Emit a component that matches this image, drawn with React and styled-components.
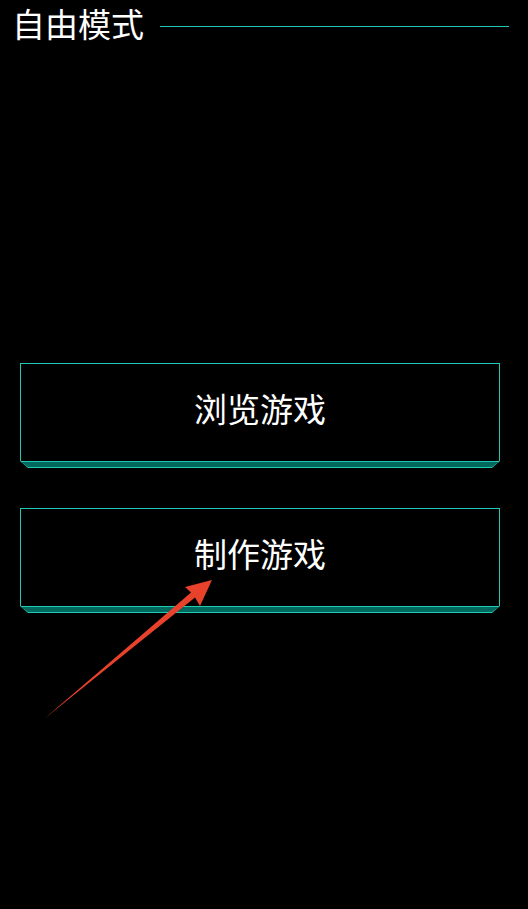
import styled, { createGlobalStyle } from 'styled-components'

const GlobalStyle = createGlobalStyle`
    html, body {
        margin: 0;
        padding: 0;
        background: #000;
    }
    body {
        font-family: "Noto Sans CJK SC", "Noto Sans", sans-serif;
        color: #fff;
    }
`
const Page = styled.div`
    position: relative;
    width: 528px;
    min-height: 909px;
    background: #000;
    overflow: hidden;
`
const Header = styled.div`
    display: flex;
    align-items: center;
    height: 46px;
    padding: 0 19px 0 12px;
    gap: 16px;
`
const Title = styled.h1`
    margin: 0;
    font-size: 33px;
    font-weight: 400;
    line-height: 42px;
    white-space: nowrap;
`
const Rule = styled.div`
    flex: 1;
    height: 1px;
    margin-top: 6px;
    background: #1fc9b5;
`
const Menu = styled.div`
    display: flex;
    flex-direction: column;
    gap: 40px;
    padding: 0 28px 0 20px;
    margin-top: 317px;
`
const ButtonWrap = styled.div`
    display: flex;
    flex-direction: column;
`
const Button = styled.button`
    height: 98px;
    box-sizing: border-box;
    background: #000;
    border: 1px solid #1fc9b5;
    border-bottom: none;
    color: #fff;
    font-family: inherit;
    font-size: 33px;
    line-height: 1;
    padding: 0 0 8px;
    cursor: pointer;
`
const Tray = styled.div`
    height: 7px;
    box-sizing: border-box;
    background: #1fc9b5;
    clip-path: polygon(0 0, 100% 0, calc(100% - 8px) 100%, 8px 100%);
    padding: 1px 1px 1px;
`
const TrayFill = styled.div`
    height: 100%;
    background: #00695d;
    clip-path: polygon(0 0, 100% 0, calc(100% - 7px) 100%, 7px 100%);
`
const Arrow = styled.svg`
    position: absolute;
    left: 0;
    top: 0;
    pointer-events: none;
`

function MenuButton({ label }) {
    return (
        <ButtonWrap>
            <Button>{label}</Button>
            <Tray><TrayFill /></Tray>
        </ButtonWrap>
    )
}

function App() {
    return (
        <Page>
            <GlobalStyle />
            <Header>
                <Title>自由模式</Title>
                <Rule />
            </Header>
            <Menu>
                <MenuButton label="浏览游戏" />
                <MenuButton label="制作游戏" />
            </Menu>
            <Arrow width="528" height="909" viewBox="0 0 528 909">
                <polygon
                    points="44,719 191,592.6 185,587 212,580 200,606 195,597.4"
                    fill="#e8412c"
                />
            </Arrow>
        </Page>
    )
}

export default App
